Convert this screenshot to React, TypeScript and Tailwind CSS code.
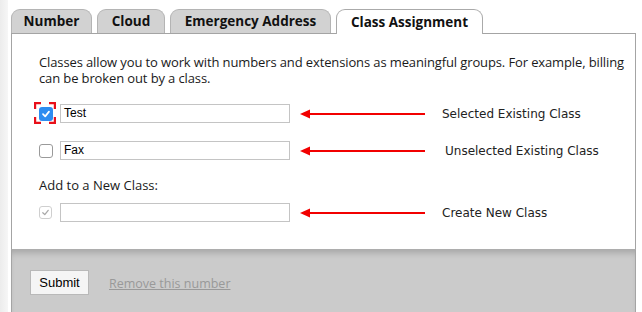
import React from 'react';

const ui = { fontFamily: '"Open Sans", "DejaVu Sans", sans-serif' };
const verdana = { fontFamily: '"DejaVu Sans", Verdana, sans-serif' };
const arial = { fontFamily: '"Liberation Sans", Arial, sans-serif' };

function Tab({ label, width, active }: { label: string; width: string; active?: boolean }) {
  return (
    <div
      className={`${width} h-[24px] flex items-center justify-center rounded-t-[9px] border border-b-0 text-[13.5px] font-bold text-[#111] ${
        active ? 'bg-white border-[#aaa] h-[25px] -mb-[1px] relative z-10' : 'bg-[#d2d2d2] border-[#b4b4b4]'
      }`}
      style={ui}
    >
      {label}
    </div>
  );
}

function Check({ state }: { state: 'on' | 'off' | 'disabled' }) {
  if (state === 'on') {
    return (
      <span className="w-[14px] h-[14px] rounded-[3px] bg-[#2d8cf0] flex items-center justify-center">
        <svg width="10" height="10" viewBox="0 0 10 10">
          <path d="M2 5.2 L4.2 7.4 L8 2.6" fill="none" stroke="white" strokeWidth="1.7" strokeLinecap="round" strokeLinejoin="round" />
        </svg>
      </span>
    );
  }
  if (state === 'disabled') {
    return (
      <span className="w-[13px] h-[13px] rounded-[3px] border border-[#cfcfcf] bg-white flex items-center justify-center">
        <svg width="9" height="9" viewBox="0 0 10 10">
          <path d="M2 5.2 L4.2 7.4 L8 2.6" fill="none" stroke="#a8a8a8" strokeWidth="1.4" strokeLinecap="round" strokeLinejoin="round" />
        </svg>
      </span>
    );
  }
  return <span className="w-[14px] h-[14px] rounded-[3px] border border-[#9a9a9a] bg-white" />;
}

function Arrow() {
  return (
    <svg width="126" height="10" viewBox="0 0 126 10" className="shrink-0">
      <line x1="8" y1="5" x2="125" y2="5" stroke="#f20000" strokeWidth="2" />
      <path d="M0 5 L10 0.5 L10 9.5 Z" fill="#f20000" />
    </svg>
  );
}

function Row({
  state,
  value,
  note,
  noteIndent,
  marked,
}: {
  state: 'on' | 'off' | 'disabled';
  value: string;
  note: string;
  noteIndent: string;
  marked?: boolean;
}) {
  return (
    <div className="flex items-center h-[19px]">
      <div className="relative w-[21px] h-[19px] flex items-center">
        <Check state={state} />
        {marked && (
          <svg width="22" height="22" viewBox="0 0 22 22" className="absolute left-[-5px] top-[-2px]">
            <path
              d="M1 7 V1 H7 M15 1 H21 V7 M21 15 V21 H15 M7 21 H1 V15"
              fill="none"
              stroke="#e8101a"
              strokeWidth="2.4"
            />
          </svg>
        )}
      </div>
      <div
        className="w-[230px] h-[19px] border border-[#c4c4c4] bg-white pl-[3px] text-[12px] leading-[17px] text-black"
        style={arial}
      >
        {value}
      </div>
      <div className="ml-[10px]">
        <Arrow />
      </div>
      <span className={`${noteIndent} text-[12px] text-[#222]`} style={verdana}>
        {note}
      </span>
    </div>
  );
}

export default function App() {
  return (
    <div className="w-[642px] h-[312px] flex bg-white overflow-hidden">
      <div className="w-[8px] bg-gradient-to-r from-[#ececec] to-[#f6f6f6]" />
      <div className="w-[3px]" />
      <div className="w-[625px] flex flex-col">
        <div className="flex items-end gap-[5px] pt-[10px] h-[33px]">
          <Tab label="Number" width="w-[81px]" />
          <Tab label="Cloud" width="w-[68px]" />
          <Tab label="Emergency Address" width="w-[161px]" />
          <Tab label="Class Assignment" width="w-[147px]" active />
        </div>
        <div className="h-[216px] border border-b-0 border-[#a4a4a4] bg-white pl-[27px] pt-[20px]">
          <p className="text-[13px] leading-[16px] tracking-[-0.12px] whitespace-nowrap text-[#1a1a1a]" style={ui}>
            Classes allow you to work with numbers and extensions as meaningful groups. For example, billing
            <br />
            can be broken out by a class.
          </p>
          <div className="mt-[18px] flex flex-col">
            <Row state="on" value="Test" note="Selected Existing Class" noteIndent="ml-[16px]" marked />
            <div className="mt-[18px]">
              <Row state="off" value="Fax" note="Unselected Existing Class" noteIndent="ml-[19px]" />
            </div>
            <div className="mt-[17px] text-[13px] leading-[16px] text-[#1a1a1a]" style={ui}>
              Add to a New Class:
            </div>
            <div className="mt-[10px]">
              <Row state="disabled" value="" note="Create New Class" noteIndent="ml-[16px]" />
            </div>
          </div>
        </div>
        <div className="flex-1 bg-[#cbcbcb] border-x border-[#a4a4a4] border-t border-t-[#adadad] shadow-[inset_0_6px_6px_-3px_rgba(0,0,0,0.18)] flex items-start pl-[18px] pt-[20px]">
          <button
            className="w-[59px] h-[25px] bg-[#f5f5f5] border border-[#b9b9b9] text-[13px] text-black"
            style={arial}
          >
            Submit
          </button>
          <span className="ml-[20px] mt-[5px] text-[12.5px] text-[#999] underline" style={ui}>
            Remove this number
          </span>
        </div>
      </div>
    </div>
  );
}
